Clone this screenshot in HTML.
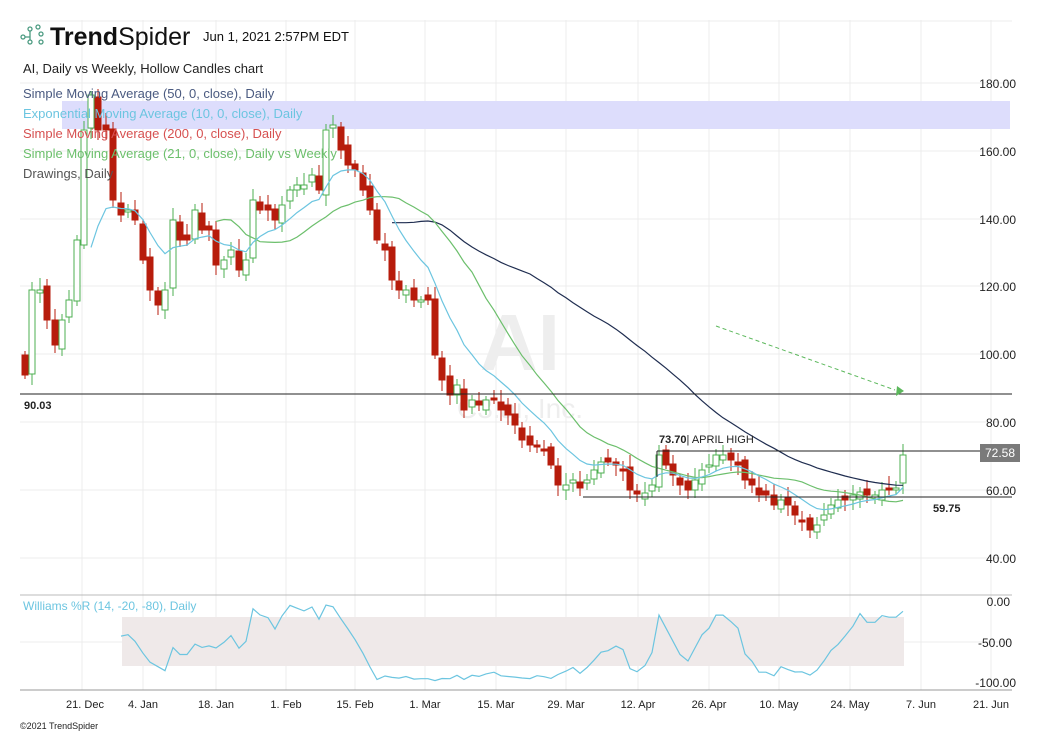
<!DOCTYPE html>
<html><head><meta charset="utf-8"><style>
body{margin:0;background:#fff;width:1042px;height:736px;overflow:hidden;font-family:"Liberation Sans",sans-serif}
svg{position:absolute;left:0;top:0}
</style></head><body>
<svg id="s" width="1042" height="736" xmlns="http://www.w3.org/2000/svg" font-family="Liberation Sans, sans-serif">
<g stroke="#ececec" stroke-width="1">
<line x1="82" y1="20" x2="82" y2="690"/><line x1="143" y1="20" x2="143" y2="690"/><line x1="216" y1="20" x2="216" y2="690"/><line x1="286" y1="20" x2="286" y2="690"/><line x1="355" y1="20" x2="355" y2="690"/><line x1="425" y1="20" x2="425" y2="690"/><line x1="496" y1="20" x2="496" y2="690"/><line x1="566" y1="20" x2="566" y2="690"/><line x1="638" y1="20" x2="638" y2="690"/><line x1="709" y1="20" x2="709" y2="690"/><line x1="779" y1="20" x2="779" y2="690"/><line x1="850" y1="20" x2="850" y2="690"/><line x1="921" y1="20" x2="921" y2="690"/><line x1="991" y1="20" x2="991" y2="690"/>
<line x1="20" y1="21" x2="1012" y2="21"/><line x1="20" y1="83" x2="1012" y2="83"/><line x1="20" y1="151" x2="1012" y2="151"/><line x1="20" y1="219" x2="1012" y2="219"/><line x1="20" y1="286" x2="1012" y2="286"/><line x1="20" y1="354" x2="1012" y2="354"/><line x1="20" y1="422" x2="1012" y2="422"/><line x1="20" y1="490" x2="1012" y2="490"/><line x1="20" y1="558" x2="1012" y2="558"/>
<line x1="20" y1="642" x2="1012" y2="642"/>
</g>
<line x1="20" y1="595" x2="1012" y2="595" stroke="#bbb"/>
<line x1="20" y1="690" x2="1012" y2="690" stroke="#999"/>
<text x="520" y="370" font-size="80" font-weight="bold" fill="#eee" text-anchor="middle">AI</text>
<text x="520" y="418" font-size="28" fill="#eee" text-anchor="middle">C3.ai, Inc.</text>
<rect x="62" y="101" width="948" height="28" fill="#ddddfc"/>
<rect x="122" y="617" width="782" height="49" fill="#efe9e9"/>
<g id="c"></g>
<line x1="20" y1="394" x2="1012" y2="394" stroke="#222"/>
<line x1="583" y1="497" x2="1012" y2="497" stroke="#222"/>
<line x1="657" y1="451" x2="1012" y2="451" stroke="#222"/>
<line x1="657" y1="451" x2="657" y2="477" stroke="#222"/>
<line x1="716" y1="326" x2="895" y2="390" stroke="#5cb85c" stroke-dasharray="4,3"/>
<polygon points="897,386 904,391 896,396" fill="#5cb85c"/>
<!-- logo -->
<g fill="none" stroke="#4a9a80" stroke-width="1.3"><circle cx="23" cy="37" r="2"/><circle cx="30" cy="29" r="2"/><circle cx="38" cy="27" r="2"/><circle cx="41" cy="34" r="2"/><circle cx="30" cy="42" r="2"/><circle cx="41" cy="42" r="2"/><path d="M25 37h5M30 31v9"/></g>
<text x="50" y="45" font-size="25" font-weight="bold" fill="#111">Trend<tspan font-weight="normal">Spider</tspan></text>
<text x="203" y="41" font-size="13" fill="#111">Jun 1, 2021 2:57PM EDT</text>
<text x="23" y="73" font-size="13" fill="#222">AI, Daily vs Weekly, Hollow Candles chart</text>
<text x="23" y="98" font-size="13" fill="#4a5a80">Simple Moving Average (50, 0, close), Daily</text>
<text x="23" y="118" font-size="13" fill="#6cc5e0">Exponential Moving Average (10, 0, close), Daily</text>
<text x="23" y="138" font-size="13" fill="#d65050">Simple Moving Average (200, 0, close), Daily</text>
<text x="23" y="158" font-size="13" fill="#6cbf6c">Simple Moving Average (21, 0, close), Daily vs Weekly</text>
<text x="23" y="178" font-size="13" fill="#555">Drawings, Daily</text>
<g font-size="12" fill="#222" text-anchor="end">
<text x="1016" y="88">180.00</text><text x="1016" y="156">160.00</text><text x="1016" y="224">140.00</text><text x="1016" y="291">120.00</text><text x="1016" y="359">100.00</text><text x="1016" y="427">80.00</text><text x="1016" y="495">60.00</text><text x="1016" y="563">40.00</text>
<text x="1010" y="606">0.00</text><text x="1012" y="647">-50.00</text><text x="1016" y="687">-100.00</text>
</g>
<rect x="980" y="444" width="40" height="18" fill="#7a7a7a"/>
<text x="1000" y="457" font-size="12" fill="#fff" text-anchor="middle">72.58</text>
<text x="24" y="409" font-size="11" font-weight="bold" fill="#222">90.03</text>
<text x="933" y="512" font-size="11" font-weight="bold" fill="#222">59.75</text>
<text x="659" y="443" font-size="11" fill="#222"><tspan font-weight="bold">73.70</tspan>| APRIL HIGH</text>
<text x="23" y="610" font-size="12" fill="#6cc5e0">Williams %R (14, -20, -80), Daily</text>
<g font-size="11" fill="#222" text-anchor="middle">
<text x="85" y="708">21. Dec</text><text x="143" y="708">4. Jan</text><text x="216" y="708">18. Jan</text><text x="286" y="708">1. Feb</text><text x="355" y="708">15. Feb</text><text x="425" y="708">1. Mar</text><text x="496" y="708">15. Mar</text><text x="566" y="708">29. Mar</text><text x="638" y="708">12. Apr</text><text x="709" y="708">26. Apr</text><text x="779" y="708">10. May</text><text x="850" y="708">24. May</text><text x="921" y="708">7. Jun</text><text x="991" y="708">21. Jun</text>
</g>
<text x="20" y="729" font-size="9" fill="#222">©2021 TrendSpider</text>
</svg>
<script>
var d=[[25,375],[32,290],[40,290],[47,320],[55,345],[62,320],[69,300],[77,240],[84,130],[91,95],[98,130],[106,130],[113,200],[121,215],[128,210],[135,220],[143,260],[150,290],[158,305],[165,290],[173,220],[180,240],[187,240],[195,210],[202,230],[209,230],[216,265],[224,260],[231,250],[239,270],[246,260],[253,200],[260,210],[268,210],[275,220],[282,205],[290,190],[297,185],[304,185],[312,175],[319,190],[326,130],[333,125],[341,150],[348,165],[355,170],[363,190],[370,210],[377,240],[385,250],[392,280],[399,290],[406,290],[414,300],[421,300],[428,300],[435,355],[442,380],[450,395],[457,385],[464,410],[472,400],[479,405],[486,400],[494,400],[501,410],[508,415],[515,425],[522,440],[530,445],[537,445],[544,450],[551,465],[558,485],[566,485],[573,480],[580,488],[587,480],[594,470],[601,462],[608,462],[616,465],[623,470],[630,490],[637,494],[645,493],[652,485],[659,455],[666,465],[673,475],[680,485],[688,490],[695,480],[702,470],[709,465],[716,455],[723,455],[731,460],[738,465],[745,480],[752,485],[759,495],[766,495],[774,505],[781,500],[788,505],[795,515],[802,520],[810,530],[817,525],[824,515],[831,505],[838,500],[845,500],[853,495],[860,492],[867,495],[875,495],[882,490],[889,488],[896,488],[903,455]];
var h='',prev=360,ys=[],hi=[],lo=[];
d.forEach(function(p,i){var x=p[0],c=p[1],o=prev+((i*37)%11-5);var t=Math.min(o,c),b=Math.max(o,c);if(b-t<2)b=t+2;var H=t-4-(i*13)%9,L=b+4+(i*7)%8;hi.push(H);lo.push(L);var up=c<o;var col=up?'#4caf50':'#b71c0c';
h+='<line x1="'+x+'" y1="'+H+'" x2="'+x+'" y2="'+L+'" stroke="'+col+'"/>';
h+='<rect x="'+(x-3)+'" y="'+t+'" width="6" height="'+(b-t)+'" fill="'+(up?'#fff':col)+'" stroke="'+col+'"/>';prev=c;ys.push(c);});
function pl(pts,col){return '<polyline points="'+pts.join(' ')+'" fill="none" stroke="'+col+'" stroke-width="1.2"/>';}
var e=[],ev=ys[0];ys.forEach(function(v,i){ev=i?ev+(v-ev)*2/11:v;if(i>=9)e.push(d[i][0]+','+ev.toFixed(1));});
function sma(n,s){var r=[];for(var i=s;i<ys.length;i++){var a=0,k=Math.min(n,i+1);for(var j=0;j<k;j++)a+=ys[i-j];r.push(d[i][0]+','+(a/k).toFixed(1));}return r;}
h+=pl(sma(50,50),'#1f2d50')+pl(sma(21,26),'#6cbf6c')+pl(e,'#6cc5e0');
var w=[];for(var i=13;i<ys.length;i++){var mh=1e9,ml=-1e9;for(var j=i-13;j<=i;j++){mh=Math.min(mh,hi[j]);ml=Math.max(ml,lo[j]);}var r=(ys[i]-mh)/(ml-mh);w.push(d[i][0]+','+(602+80*r).toFixed(1));}
h+=pl(w,'#6cc5e0');
document.getElementById('c').innerHTML=h;
</script>
</body></html>
